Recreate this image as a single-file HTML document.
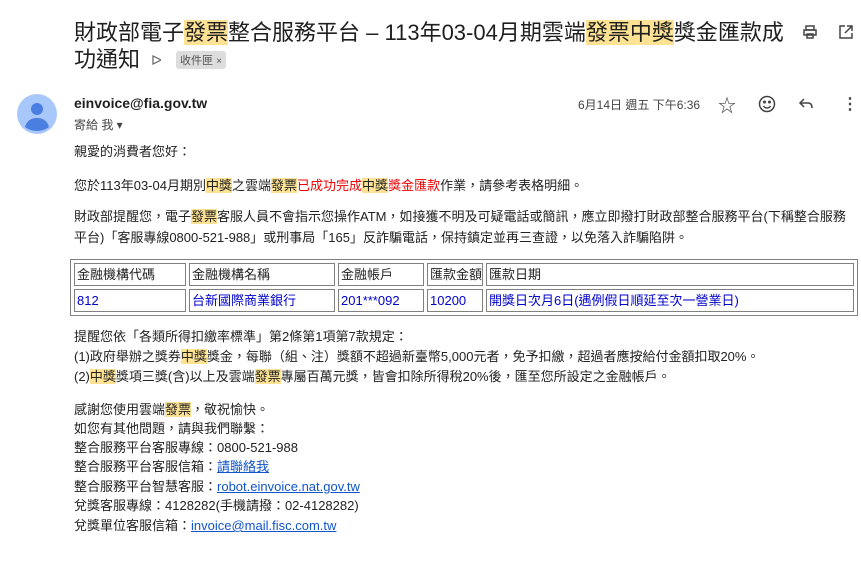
<!DOCTYPE html>
<html><head><meta charset="utf-8"><style>
body{margin:0;width:861px;height:571px;background:#fff;font-family:"Liberation Sans","Noto Sans CJK TC",sans-serif;color:#222;position:relative;overflow:hidden}
.a{position:absolute;white-space:nowrap}
.t{font-size:22px;color:#1f1f1f;line-height:27px}
.b{font-size:13px;line-height:19px;left:74px}
.h{background:#fde293}
.r{color:#e00}
a{color:#15c;text-decoration:underline}
table{position:absolute;left:70px;top:259px;width:788px;border:1px solid #808080;border-collapse:separate;border-spacing:3px;font-size:13px;table-layout:fixed}
td{border:1px solid #808080;height:21px;padding:0 2px;white-space:nowrap;overflow:hidden;line-height:21px}
tr.d td{color:#00c}
</style></head><body>
<div class="a t" style="left:74px;top:19px">財政部電子<span class="h">發票</span>整合服務平台 – 113年03-04月期雲端<span class="h">發票中獎</span>獎金匯款成</div>
<div class="a t" style="left:74px;top:46px">功通知</div>
<div class="a" style="left:151px;top:52px;font-size:14px;color:#666">ᐅ</div>
<div class="a" style="left:176px;top:51px;background:#ddd;color:#555;font-size:11px;padding:1px 4px;border-radius:3px">收件匣 <span style="font-size:10px">×</span></div>
<svg class="a" style="left:802px;top:24px" width="16" height="16" viewBox="0 0 16 16" fill="none" stroke="#444" stroke-width="1.5"><rect x="4" y="2" width="8" height="4"/><rect x="2" y="6" width="12" height="5"/><rect x="5" y="10" width="6" height="4"/></svg>
<svg class="a" style="left:838px;top:24px" width="16" height="16" viewBox="0 0 16 16" fill="none" stroke="#444" stroke-width="1.5"><path d="M7 2H2v12h12V9M9 2h5v5M14 2L7 9"/></svg>
<svg class="a" style="left:17px;top:94px" width="40" height="40" viewBox="0 0 40 40"><circle cx="20" cy="20" r="20" fill="#a8c7fa"/><circle cx="20" cy="15" r="6" fill="#4a7ee0"/><path d="M8 33c2-7 7-9 12-9s10 2 12 9a20 20 0 0 1-24 0z" fill="#4a7ee0"/></svg>
<div class="a" style="left:74px;top:95px;font-size:14px;font-weight:bold;color:#1f1f1f">einvoice@fia.gov.tw</div>
<div class="a" style="left:74px;top:116px;font-size:12px;color:#444">寄給 我 ▾</div>
<div class="a" style="left:578px;top:96px;font-size:12px;color:#444">6月14日 週五 下午6:36</div>
<div class="a" style="left:718px;top:92px;font-size:18px;color:#444">☆</div>
<svg class="a" style="left:758px;top:95px" width="18" height="18" viewBox="0 0 18 18" fill="none" stroke="#444" stroke-width="1.5"><circle cx="9" cy="9" r="7.5"/><circle cx="6.5" cy="7" r=".8" fill="#444"/><circle cx="11.5" cy="7" r=".8" fill="#444"/><path d="M5.5 11c1 1.5 2 2 3.5 2s2.5-.5 3.5-2"/></svg>
<svg class="a" style="left:798px;top:97px" width="16" height="14" viewBox="0 0 16 14" fill="none" stroke="#444" stroke-width="1.5"><path d="M6 2L2 6l4 4M2 6h8c3 0 4 2 4 5"/></svg>
<div class="a" style="left:842px;top:94px;font-size:16px;color:#444;font-weight:bold">⋮</div>

<div class="a b" style="top:142px">親愛的消費者您好：</div>
<div class="a b" style="top:176px">您於113年03-04月期別<span class="h">中獎</span>之雲端<span class="h">發票</span><span class="r">已成功完成</span><span class="h">中獎</span><span class="r">獎金匯款</span>作業，請參考表格明細。</div>
<div class="a b" style="top:207px">財政部提醒您，電子<span class="h">發票</span>客服人員不會指示您操作ATM，如接獲不明及可疑電話或簡訊，應立即撥打財政部整合服務平台(下稱整合服務</div>
<div class="a b" style="top:228px">平台)「客服專線0800-521-988」或刑事局「165」反詐騙電話，保持鎮定並再三查證，以免落入詐騙陷阱。</div>
<table><colgroup><col style="width:112px"><col style="width:146px"><col style="width:86px"><col style="width:56px"><col></colgroup>
<tr><td>金融機構代碼</td><td>金融機構名稱</td><td>金融帳戶</td><td>匯款金額</td><td>匯款日期</td></tr>
<tr class="d"><td>812</td><td>台新國際商業銀行</td><td>201***092</td><td>10200</td><td>開獎日次月6日(遇例假日順延至次一營業日)</td></tr></table>
<div class="a b" style="top:327px">提醒您依「各類所得扣繳率標準」第2條第1項第7款規定：</div>
<div class="a b" style="top:347px">(1)政府舉辦之獎券<span class="h">中獎</span>獎金，每聯（組、注）獎額不超過新臺幣5,000元者，免予扣繳，超過者應按給付金額扣取20%。</div>
<div class="a b" style="top:367px">(2)<span class="h">中獎</span>獎項三獎(含)以上及雲端<span class="h">發票</span>專屬百萬元獎，皆會扣除所得稅20%後，匯至您所設定之金融帳戶。</div>
<div class="a b" style="top:400px">感謝您使用雲端<span class="h">發票</span>，敬祝愉快。</div>
<div class="a b" style="top:419px">如您有其他問題，請與我們聯繫：</div>
<div class="a b" style="top:438px">整合服務平台客服專線：0800-521-988</div>
<div class="a b" style="top:457px">整合服務平台客服信箱：<a>請聯絡我</a></div>
<div class="a b" style="top:477px">整合服務平台智慧客服：<a>robot.einvoice.nat.gov.tw</a></div>
<div class="a b" style="top:496px">兌獎客服專線：4128282(手機請撥：02-4128282)</div>
<div class="a b" style="top:516px">兌獎單位客服信箱：<a>invoice@mail.fisc.com.tw</a></div>
</body></html>
